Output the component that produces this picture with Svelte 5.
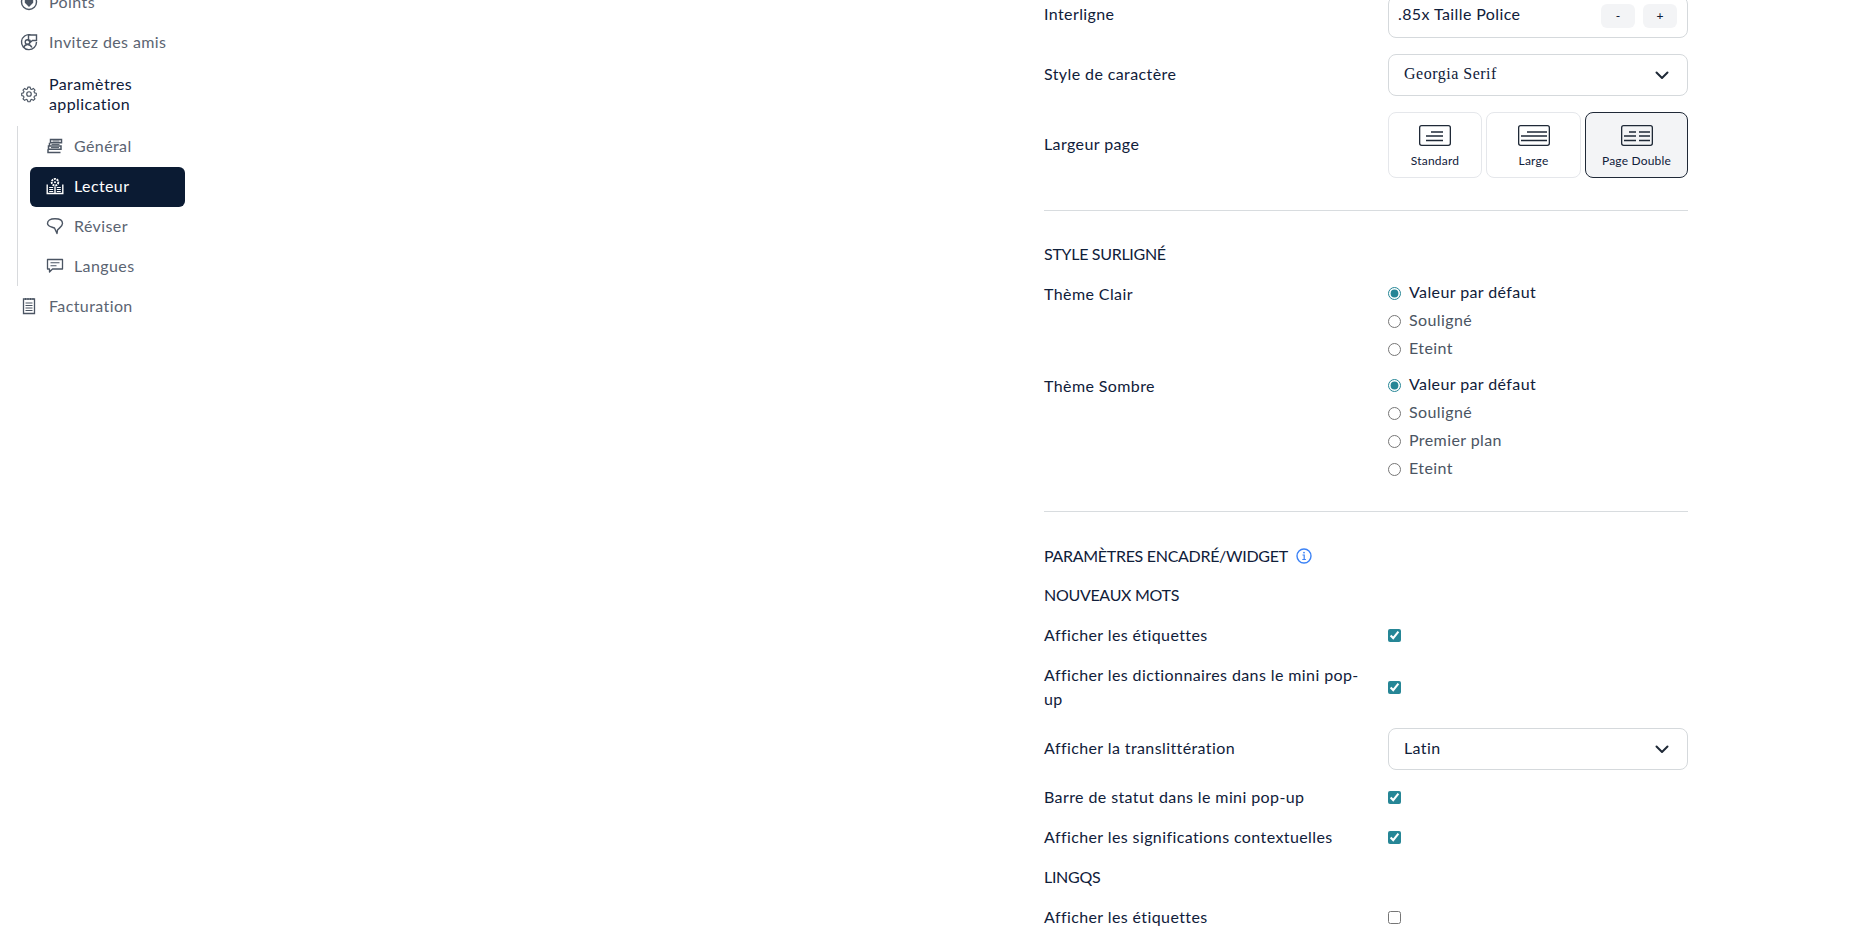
<script>
  const chev = 'M1.500 1.500 7 7l5.500-5.500';
</script>

<div class="page">
  <aside class="sidebar">
    <div class="item">
      <svg class="ic" viewBox="0 0 18 18" fill="none" stroke="#4b5563" stroke-width="1.400"><circle cx="9" cy="9" r="7.500"/><path d="M5.500 6.500h7v3L9 13 5.500 9.500z" fill="#4b5563"/></svg>
      <span>Points</span>
    </div>
    <div class="item">
      <svg class="ic" viewBox="0 0 18 18" fill="none" stroke="#4b5563" stroke-width="1.400"><path d="M10.500 1.800A7.500 7.500 0 1 0 16.500 9"/><path d="M8.500 2h8v5.500h-4L10 9.500V7.500H8.500z" fill="#fff"/><circle cx="7.500" cy="9" r="2.300"/><path d="M3.500 14.500c1-2 2.500-3 4-3s3.500 1 4.500 3"/></svg>
      <span>Invitez des amis</span>
    </div>
    <div class="item head">
      <svg class="ic" viewBox="0 0 24 24" fill="none" stroke="#4b5563" stroke-width="1.600" stroke-linejoin="round"><path d="M10.300 3h3.400l.5 2.600 1.900.8 2.200-1.500 2.400 2.400-1.500 2.200.8 1.900 2.600.5v3.400l-2.600.5-.8 1.900 1.500 2.200-2.400 2.400-2.200-1.500-1.900.8-.5 2.600h-3.400l-.5-2.600-1.900-.8-2.200 1.500-2.400-2.400 1.500-2.200-.8-1.900-2.600-.5v-3.400l2.600-.5.8-1.900-1.500-2.200 2.400-2.400 2.200 1.500 1.900-.8z" transform="translate(12 12) scale(.92) translate(-12 -13)"/><circle cx="12" cy="12" r="3"/></svg>
      <span>Paramètres<br />application</span>
    </div>
    <div class="sub">
      <div class="subitem">
        <svg class="ic" viewBox="0 0 18 18" fill="none" stroke="#4b5563" stroke-width="1.500"><path d="M4.500 2.500h11v3.200h-11zM3.500 5.700v3.300h11.500M2.500 9h12.500v3.200H2.500zM2 12.200v3.300h12.500"/><path d="M6.500 4h7M5.500 7.400h8M5 10.600h8" stroke-width="1"/></svg>
        <span>Général</span>
      </div>
      <div class="subitem active">
        <svg class="ic" viewBox="0 0 18 18" fill="none" stroke="#fff" stroke-width="1.400"><path d="M1.200 7.500v9h15.600v-9M9 9.500v7"/><path d="M3.200 10.500h4M3.200 12.500h4M3.200 14.500h4M10.800 10.500h4M10.800 12.500h4M10.800 14.500h4" stroke-width="1"/><circle cx="9" cy="5.200" r="3.300" stroke-width="1.900" stroke-dasharray="2 .8"/><circle cx="9" cy="5.200" r="1" fill="#fff" stroke="none"/></svg>
        <span>Lecteur</span>
      </div>
      <div class="subitem">
        <svg class="ic" viewBox="0 0 18 18" fill="none" stroke="#4b5563" stroke-width="1.400" stroke-linejoin="round"><path d="M1.500 6.500C1.500 3.500 4 1.800 9 1.800s7.500 1.700 7.500 4.700c0 3-3.500 4.500-5 6.500l-.5 3.500-2.500-5.500C5.500 9.800 1.500 9.500 1.500 6.500z"/></svg>
        <span>Réviser</span>
      </div>
      <div class="subitem">
        <svg class="ic" viewBox="0 0 18 18" fill="none" stroke="#4b5563" stroke-width="1.300" stroke-linejoin="round"><path d="M1.500 2.500h15v9.500h-10l-3 3V12h-2z"/><path d="M4.500 5.700h9M4.500 8.700h6" stroke-width="1.100"/></svg>
        <span>Langues</span>
      </div>
    </div>
    <div class="item bill">
      <svg class="ic" viewBox="0 0 18 18" fill="none" stroke="#4b5563" stroke-width="1.300"><path d="M3.500 2h11v14.500h-11z"/><path d="M5.500 1v2M8 1v2M10.500 1v2M13 1v2" stroke-width="1"/><path d="M5.500 6h7M5.500 8.500h7M5.500 11h7M5.500 13.500h7" stroke-width="1.100"/></svg>
      <span>Facturation</span>
    </div>
  </aside>

  <main class="main">
    <section class="stack">
      <div class="row">
        <div class="label first">Interligne</div>
        <div class="box spacing">
          <span>.85x Taille Police</span>
          <span class="steps"><button>-</button><button>+</button></span>
        </div>
      </div>
      <div class="row center">
        <div class="label">Style de caractère</div>
        <div class="box select serif">
          <span class="up">Georgia Serif</span>
          <svg class="chev" viewBox="0 0 14 9" fill="none" stroke="#1f2937" stroke-width="2" stroke-linecap="round" stroke-linejoin="round"><path d={chev}/></svg>
        </div>
      </div>
      <div class="row center">
        <div class="label">Largeur page</div>
        <div class="widths">
          <div class="wcard std">
            <svg class="pg" viewBox="0 0 32 21" fill="none" stroke="#1f2937" stroke-width="1.300"><rect x=".65" y=".65" width="30.700" height="19.700" rx="2"/><path d="M12 7h12M7 11h17M7 15.500h17"/></svg>
            <span>Standard</span>
          </div>
          <div class="wcard lrg">
            <svg class="pg" viewBox="0 0 32 21" fill="none" stroke="#1f2937" stroke-width="1.300"><rect x=".65" y=".65" width="30.700" height="19.700" rx="2"/><path d="M9 7h20M3 11h26M3 15.500h26"/></svg>
            <span>Large</span>
          </div>
          <div class="wcard dbl on">
            <svg class="pg" viewBox="0 0 32 21" fill="none" stroke="#1f2937" stroke-width="1.300"><rect x=".65" y=".65" width="30.700" height="19.700" rx="2"/><path d="M8 7h7M3 11h12M3 15.500h12M18 7h11M18 11h11M18 15.500h11"/></svg>
            <span>Page Double</span>
          </div>
        </div>
      </div>
    </section>

    <hr />

    <section class="stack">
      <h3>STYLE SURLIGNÉ</h3>
      <div class="row">
        <div class="label">Thème Clair</div>
        <div class="radios">
          <label class="sel"><input type="radio" name="a" checked /><span>Valeur par défaut</span></label>
          <label><input type="radio" name="a" /><span>Souligné</span></label>
          <label><input type="radio" name="a" /><span>Eteint</span></label>
        </div>
      </div>
      <div class="row">
        <div class="label">Thème Sombre</div>
        <div class="radios">
          <label class="sel"><input type="radio" name="b" checked /><span>Valeur par défaut</span></label>
          <label><input type="radio" name="b" /><span>Souligné</span></label>
          <label><input type="radio" name="b" /><span>Premier plan</span></label>
          <label><input type="radio" name="b" /><span>Eteint</span></label>
        </div>
      </div>
    </section>

    <hr />

    <section class="stack">
      <h3 class="withinfo">PARAMÈTRES ENCADRÉ/WIDGET
        <svg class="info" viewBox="0 0 16 16" fill="none" stroke="#3b82f6" stroke-width="1.400"><circle cx="8" cy="8" r="7"/><path d="M6.500 7h1.700v4.500M6.300 11.500h3.600" stroke-width="1.200"/><circle cx="8" cy="4.600" r=".9" fill="#3b82f6" stroke="none"/></svg>
      </h3>
      <h3>NOUVEAUX MOTS</h3>
      <div class="row center"><div class="label">Afficher les étiquettes</div><div class="tick"><input type="checkbox" checked /></div></div>
      <div class="row center"><div class="label">Afficher les dictionnaires dans le mini pop-up</div><div class="tick"><input type="checkbox" checked /></div></div>
      <div class="row center">
        <div class="label">Afficher la translittération</div>
        <div class="box select">
          <span class="up">Latin</span>
          <svg class="chev" viewBox="0 0 14 9" fill="none" stroke="#1f2937" stroke-width="2" stroke-linecap="round" stroke-linejoin="round"><path d={chev}/></svg>
        </div>
      </div>
      <div class="row center"><div class="label">Barre de statut dans le mini pop-up</div><div class="tick"><input type="checkbox" checked /></div></div>
      <div class="row center"><div class="label">Afficher les significations contextuelles</div><div class="tick"><input type="checkbox" checked /></div></div>
      <h3>LINGQS</h3>
      <div class="row center"><div class="label">Afficher les étiquettes</div><div class="tick"><input type="checkbox" /></div></div>
    </section>
  </main>
</div>

<style>
  :global(body) {
    margin: 0;
    background: #fff;
    overflow: hidden;
  }
  .page {
    display: flex;
    align-items: flex-start;
    height: 940px;
    overflow: hidden;
    font-family: "Lato", sans-serif;
    font-size: 16px;
    letter-spacing: 0.4px;
    line-height: 24px;
    color: #10203a;
  }
  .sidebar {
    flex: 0 0 185px;
    margin-top: -10px;
    display: flex;
    flex-direction: column;
    color: #5b6472;
  }
  .ic {
    width: 18px;
    height: 18px;
    flex: none;
  }
  .item {
    display: flex;
    align-items: center;
    gap: 11px;
    padding-left: 20px;
    height: 24px;
    margin-bottom: 16px;
  }
  .head {
    height: 48px;
    margin-bottom: 8px;
    line-height: 20px;
    color: #10203a;
  }
  .sub {
    margin-left: 17px;
    border-left: 1px solid #d8dadd;
    padding-left: 12px;
    margin-bottom: 8px;
  }
  .subitem {
    display: flex;
    align-items: center;
    gap: 10px;
    height: 40px;
    padding-left: 16px;
    border-radius: 6px;
  }
  .active {
    box-sizing: border-box;
    padding-bottom: 2px;
    background: #0b1b33;
    color: #fff;
    margin-top: 1px;
    margin-bottom: -1px;
  }
  .main {
    margin-left: 859px;
    margin-top: -4px;
    width: 644px;
    flex: none;
  }
  .stack {
    display: flex;
    flex-direction: column;
    gap: 16px;
  }
  .row {
    display: grid;
    grid-template-columns: 320px 300px;
    column-gap: 24px;
    align-items: start;
  }
  .center {
    align-items: center;
  }
  .label {
    min-width: 0;
    margin-top: -1px;
    margin-bottom: 1px;
  }
  .first {
    padding-top: 7px;
  }
  .up {
    margin-bottom: 2px;
  }
  .tick {
    margin-bottom: 2px;
  }
  hr {
    border: 0;
    border-top: 1px solid #d8dcdf;
    margin: 32px 0;
  }
  h3 {
    margin: 0;
    font: inherit;
    font-weight: 400;
    letter-spacing: -0.3px;
    height: 24px;
    line-height: 22px;
  }
  .withinfo {
    display: flex;
    align-items: center;
    gap: 8px;
  }
  .info {
    width: 16px;
    height: 16px;
    flex: none;
  }
  .box {
    box-sizing: border-box;
    height: 42px;
    border: 1px solid #d5d9dc;
    border-radius: 8px;
    display: flex;
    align-items: center;
    justify-content: space-between;
  }
  .spacing {
    padding: 0 10px 6px 9px;
  }
  .steps {
    display: flex;
    gap: 8px;
    margin-top: 4px;
  }
  .steps button {
    width: 34px;
    height: 24px;
    border: 0;
    border-radius: 6px;
    background: #f3f4f6;
    color: #10203a;
    font: 500 12px/24px "Lato", sans-serif;
    padding: 0;
  }
  .select {
    padding: 0 18px 0 15px;
  }
  .serif {
    font-family: "Liberation Serif", serif;
    font-size: 16px;
    letter-spacing: 0.5px;
  }
  .chev {
    width: 14px;
    height: 9px;
  }
  .widths {
    display: flex;
    gap: 4px;
  }
  .wcard {
    box-sizing: border-box;
    height: 66px;
    border: 1px solid #e5e7eb;
    border-radius: 8px;
    display: flex;
    flex-direction: column;
    align-items: center;
    padding-top: 12px;
    font-size: 12px;
    line-height: 16px;
    letter-spacing: 0.2px;
    gap: 7px;
  }
  .std {
    width: 94px;
  }
  .lrg {
    width: 95px;
  }
  .dbl {
    width: 103px;
  }
  .on {
    background: #f3f4f6;
    border-color: #1f2937;
  }
  .pg {
    width: 32px;
    height: 21px;
  }
  .radios {
    display: flex;
    flex-direction: column;
    gap: 8px;
  }
  .radios label {
    display: flex;
    align-items: center;
    gap: 8px;
    height: 20px;
    color: #4b5563;
  }
  .radios label span {
    margin-bottom: 2px;
  }
  .radios label.sel {
    color: #10203a;
  }
  input {
    margin: 0;
    display: block;
    accent-color: #268696;
  }
</style>
